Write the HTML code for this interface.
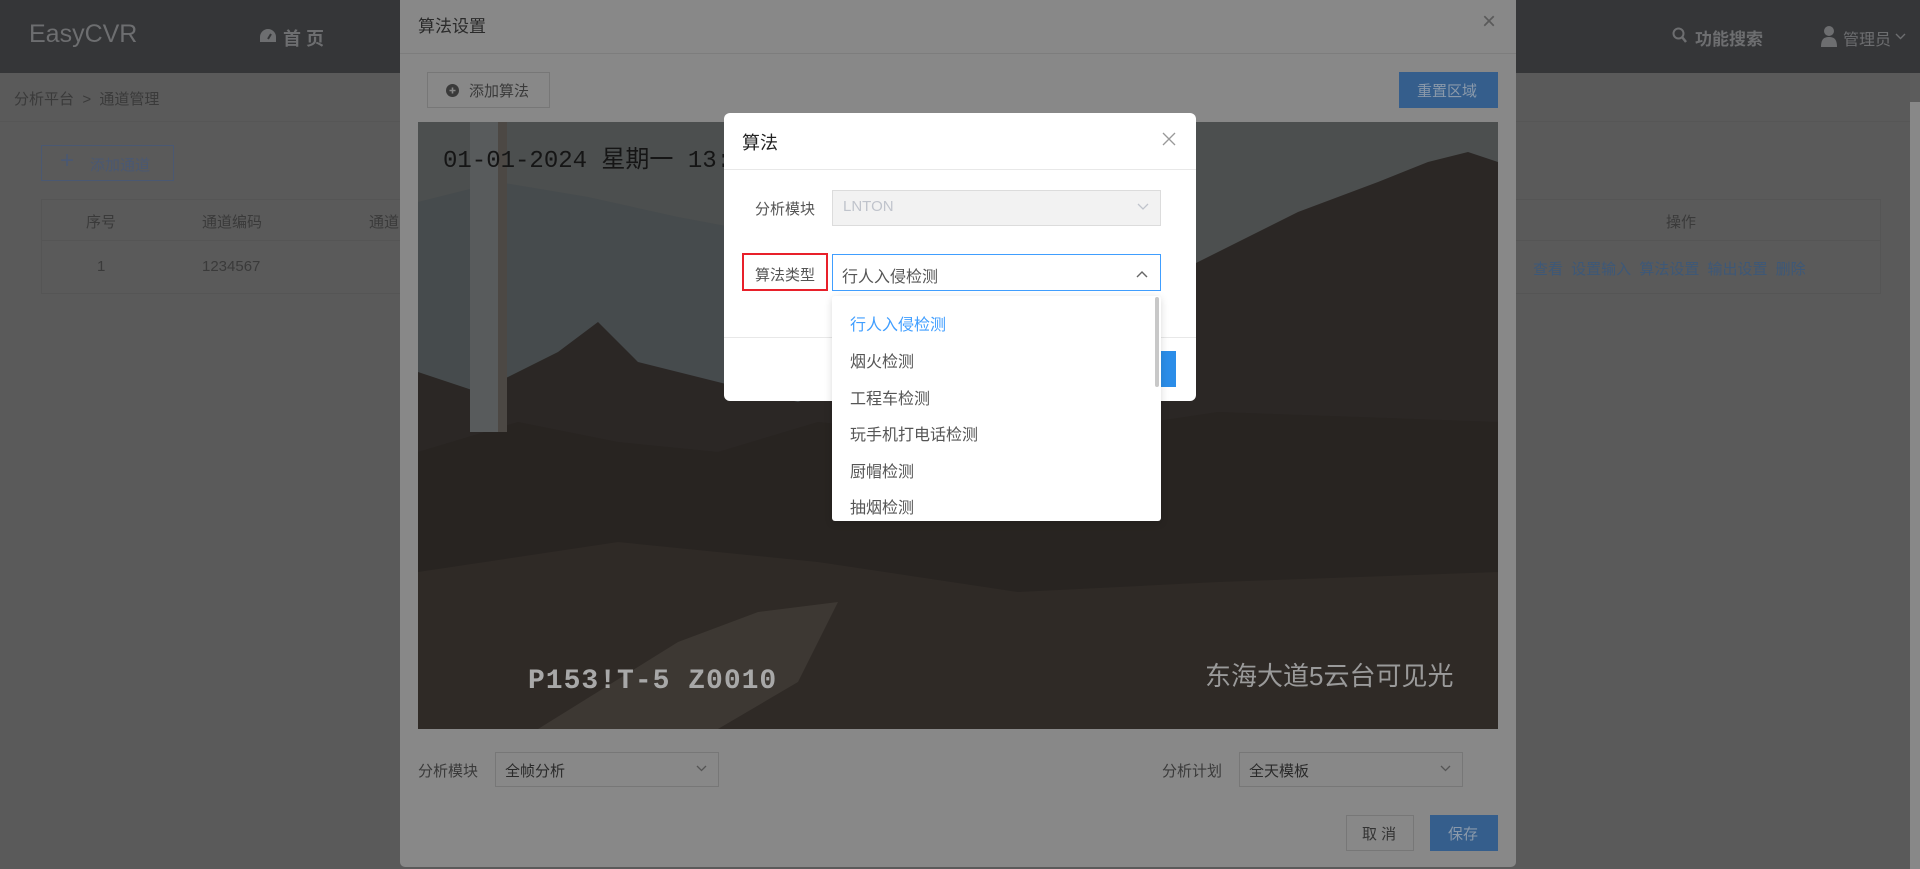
<!DOCTYPE html>
<html><head><meta charset="utf-8">
<style>
*{margin:0;padding:0;box-sizing:border-box}
body{width:1920px;height:869px;overflow:hidden;background:#5a5a5a;font-family:"Liberation Sans","Noto Sans CJK SC",sans-serif;position:relative;color:#444}
.abs{position:absolute}
.nav{left:0;top:0;width:1920px;height:73px;background:#353638}
.t{position:absolute;white-space:nowrap}
</style></head><body>
<div class="abs nav"></div>
<div class="t" style="left:29px;top:20px;font-size:25px;color:#6d6e70">EasyCVR</div>
<svg class="abs" style="left:259px;top:28px" width="18" height="16" viewBox="0 0 18 16"><path d="M9 1a8 8 0 0 0-8 8v5h16V9A8 8 0 0 0 9 1z" fill="#6d6e70"/><path d="M9 11l3-5" stroke="#353638" stroke-width="2"/></svg>
<div class="t" style="left:283px;top:25px;font-size:18px;font-weight:bold;color:#6d6e70">首 页</div>
<svg class="abs" style="left:1672px;top:27px" width="16" height="18" viewBox="0 0 16 18"><circle cx="6.5" cy="6.5" r="5" fill="none" stroke="#6d6e70" stroke-width="2"/><path d="M10 10l4 5" stroke="#6d6e70" stroke-width="2.5"/></svg>
<div class="t" style="left:1695px;top:25px;font-size:17px;font-weight:bold;color:#6d6e70">功能搜索</div>
<svg class="abs" style="left:1821px;top:25px" width="16" height="22" viewBox="0 0 16 22"><circle cx="8" cy="6" r="5" fill="#6d6e70"/><path d="M0 22c0-8 3-10 8-10s8 2 8 10z" fill="#6d6e70"/></svg>
<div class="t" style="left:1843px;top:26px;font-size:16px;color:#6d6e70">管理员</div>
<svg class="abs" style="left:1895px;top:33px" width="11" height="7"><path d="M1 1l4.5 4.5L10 1" fill="none" stroke="#6d6e70" stroke-width="1.4"/></svg>
<div class="abs" style="left:1910px;top:73px;width:10px;height:796px;background:#5c5c5c"></div>
<div class="abs" style="left:1910px;top:102px;width:10px;height:767px;background:#888"></div>

<div class="t" style="left:14px;top:88px;font-size:15px;color:#3a3a3a">分析平台 &nbsp;&gt;&nbsp; 通道管理</div>
<div class="abs" style="left:0;top:121px;width:1910px;height:1px;background:#565656"></div>
<div class="abs" style="left:41px;top:145px;width:133px;height:36px;border:1px solid #4a5872"></div>
<div class="t" style="left:60px;top:147px;font-size:24px;color:#4a5872">+</div>
<div class="t" style="left:90px;top:154px;font-size:15px;color:#4a5872">添加通道</div>
<div class="abs" style="left:41px;top:199px;width:1840px;height:95px;border:1px solid #555"></div>
<div class="abs" style="left:41px;top:240px;width:1840px;height:1px;background:#555"></div>
<div class="t" style="left:86px;top:211px;font-size:15px;color:#3a3a3a">序号</div>
<div class="t" style="left:202px;top:211px;font-size:15px;color:#3a3a3a">通道编码</div>
<div class="t" style="left:369px;top:211px;font-size:15px;color:#3a3a3a">通道</div>
<div class="t" style="left:97px;top:258px;font-size:15px;color:#3a3a3a">1</div>
<div class="t" style="left:202px;top:258px;font-size:15px;color:#3a3a3a">1234567</div>
<div class="t" style="left:1666px;top:211px;font-size:15px;color:#3a3a3a">操作</div>
<div class="t" style="left:1533px;top:258px;font-size:15px;color:#3d5878;word-spacing:4px">查看 设置输入 算法设置 输出设置 删除</div>

<!-- outer dialog -->
<div class="abs" style="left:400px;top:0;width:1116px;height:867px;background:#888;border-radius:0 0 5px 5px"></div>
<div class="t" style="left:418px;top:12px;font-size:17px;color:#2a2a2a">算法设置</div>
<div class="t" style="left:1482px;top:8px;font-size:24px;color:#5a5a5a;font-weight:lighter">×</div>
<div class="abs" style="left:400px;top:53px;width:1116px;height:1px;background:#7d7d7d"></div>
<div class="abs" style="left:427px;top:72px;width:123px;height:36px;border:1px solid #777"></div>
<svg class="abs" style="left:446px;top:84px" width="13" height="13"><circle cx="6.5" cy="6.5" r="6.5" fill="#3a3a3a"/><path d="M6.5 3.5v6M3.5 6.5h6" stroke="#888" stroke-width="1.6"/></svg>
<div class="t" style="left:469px;top:80px;font-size:15px;color:#3a3a3a">添加算法</div>
<div class="abs" style="left:1399px;top:72px;width:99px;height:36px;background:#355e8c"></div>
<div class="t" style="left:1417px;top:80px;font-size:15px;color:#8a99aa">重置区域</div>

<!-- video -->
<svg class="abs" style="left:418px;top:122px" width="1080" height="607" viewBox="0 0 1080 607">
<rect width="1080" height="607" fill="#4c4f4f"/>
<path d="M0 80 L80 60 L170 75 L260 95 L340 110 L420 120 L520 130 L600 150 L700 180 L1080 170 L1080 607 L0 607z" fill="#464b4d"/>
<path d="M0 250 L60 270 L140 230 L180 200 L220 240 L300 260 L380 280 L460 250 L540 240 L640 200 L740 160 L820 120 L880 90 L960 60 L1010 40 L1050 30 L1080 40 L1080 607 L0 607z" fill="#2b2725"/>
<path d="M0 330 L100 300 L200 320 L300 330 L400 300 L600 320 L800 290 L1080 300 L1080 607 L0 607z" fill="#282421"/>
<path d="M0 450 L200 420 L400 440 L600 470 L800 460 L1080 450 L1080 607 L0 607z" fill="#2f2a26"/>
<path d="M120 607 L260 520 L340 490 L420 480 L380 560 L300 607z" fill="#3d3833"/>
<rect x="52" y="0" width="37" height="310" fill="#585b5c"/>
<rect x="80" y="0" width="9" height="310" fill="#4c4844"/>
<text x="25" y="45" font-family="Liberation Mono,Noto Sans CJK SC,monospace" font-size="24" fill="#151515">01-01-2024 星期一 13:2</text>
<text x="110" y="566" font-family="Liberation Mono,monospace" font-size="28" font-weight="bold" fill="#a8a8a8" letter-spacing="1">P153!T-5  Z0010</text>
<text x="787" y="563" font-family="Liberation Sans,Noto Sans CJK SC,sans-serif" font-size="26" fill="#9a9a9a">东海大道5云台可见光</text>
</svg>

<div class="t" style="left:418px;top:760px;font-size:15px;color:#3a3a3a">分析模块</div>
<div class="abs" style="left:495px;top:752px;width:224px;height:35px;border:1px solid #777"></div>
<div class="t" style="left:505px;top:760px;font-size:15px;color:#2a2a2a">全帧分析</div>
<svg class="abs" style="left:696px;top:765px" width="11" height="7"><path d="M1 1l4.5 4.5L10 1" fill="none" stroke="#555" stroke-width="1.3"/></svg>
<div class="t" style="left:1162px;top:760px;font-size:15px;color:#3a3a3a">分析计划</div>
<div class="abs" style="left:1239px;top:752px;width:224px;height:35px;border:1px solid #777"></div>
<div class="t" style="left:1249px;top:760px;font-size:15px;color:#2a2a2a">全天模板</div>
<svg class="abs" style="left:1440px;top:765px" width="11" height="7"><path d="M1 1l4.5 4.5L10 1" fill="none" stroke="#555" stroke-width="1.3"/></svg>
<div class="abs" style="left:1346px;top:815px;width:68px;height:36px;border:1px solid #777"></div>
<div class="t" style="left:1362px;top:823px;font-size:15px;color:#333">取 消</div>
<div class="abs" style="left:1430px;top:815px;width:68px;height:36px;background:#355e8c"></div>
<div class="t" style="left:1448px;top:823px;font-size:15px;color:#8a99aa">保存</div>

<!-- inner dialog -->
<div class="abs" style="left:724px;top:113px;width:472px;height:288px;background:#fff;border-radius:6px"></div>
<div class="t" style="left:742px;top:129px;font-size:18px;color:#222">算法</div>
<svg class="abs" style="left:1162px;top:132px" width="14" height="14"><path d="M1 1l12 12M13 1L1 13" stroke="#999" stroke-width="1.3"/></svg>
<div class="abs" style="left:724px;top:169px;width:472px;height:1px;background:#e8e8e8"></div>
<div class="t" style="left:755px;top:198px;font-size:15px;color:#555">分析模块</div>
<div class="abs" style="left:832px;top:190px;width:329px;height:36px;background:#f2f2f2;border:1px solid #dcdcdc"></div>
<div class="t" style="left:843px;top:198px;font-size:15px;color:#c0c4cc">LNTON</div>
<svg class="abs" style="left:1137px;top:203px" width="12" height="8"><path d="M1 1l5 5 5-5" fill="none" stroke="#c0c4cc" stroke-width="1.3"/></svg>
<div class="abs" style="left:742px;top:253px;width:86px;height:38px;border:2px solid #e8202a"></div>
<div class="t" style="left:755px;top:264px;font-size:15px;color:#555">算法类型</div>
<div class="abs" style="left:832px;top:254px;width:329px;height:37px;border:1px solid #409eff"></div>
<div class="t" style="left:842px;top:263px;font-size:16px;color:#555">行人入侵检测</div>
<svg class="abs" style="left:1136px;top:270px" width="12" height="8"><path d="M1 7l5-5 5 5" fill="none" stroke="#666" stroke-width="1.4"/></svg>
<div class="abs" style="left:724px;top:337px;width:472px;height:1px;background:#e8e8e8"></div>
<div class="abs" style="left:1160px;top:351px;width:16px;height:36px;background:#2b8de8"></div>
<div class="abs" style="left:832px;top:296px;width:329px;height:225px;background:#fff;border-radius:3px;box-shadow:0 2px 8px rgba(0,0,0,.15)"></div>
<div class="abs" style="left:1155px;top:297px;width:4px;height:90px;background:#c8c8c8;border-radius:2px"></div>
<div class="t" style="left:850px;top:311px;font-size:16px;color:#409eff">行人入侵检测</div>
<div class="t" style="left:850px;top:348px;font-size:16px;color:#555">烟火检测</div>
<div class="t" style="left:850px;top:385px;font-size:16px;color:#555">工程车检测</div>
<div class="t" style="left:850px;top:421px;font-size:16px;color:#555">玩手机打电话检测</div>
<div class="t" style="left:850px;top:458px;font-size:16px;color:#555">厨帽检测</div>
<div class="t" style="left:850px;top:494px;font-size:16px;color:#555">抽烟检测</div>
</body></html>
